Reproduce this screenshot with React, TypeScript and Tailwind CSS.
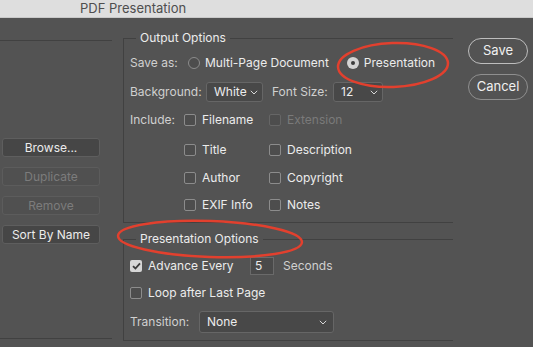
import React from "react";

const font = { fontFamily: "Inter, 'Noto Sans', sans-serif" };

function Chevron() {
  return (
    <svg width="8" height="5" viewBox="0 0 8 5" className="shrink-0">
      <polyline points="0.8,0.8 4,4 7.2,0.8" fill="none" stroke="#d8d8d8" strokeWidth="1" />
    </svg>
  );
}

function Select({ value, w }: { value: string; w: string }) {
  return (
    <div className={`flex items-center justify-between h-[20px] pl-[7px] pr-[4px] rounded-[3px] border border-[#666666] bg-[#484848] text-[#ededed] ${w}`}>
      <span>{value}</span>
      <Chevron />
    </div>
  );
}

function Check({ label, checked, disabled, w }: { label: string; checked?: boolean; disabled?: boolean; w?: string }) {
  return (
    <div className={`flex items-center gap-[6px] ${w ?? ""}`}>
      {checked ? (
        <div className="w-[12px] h-[12px] rounded-[2px] bg-[#d6d6d6] flex items-center justify-center">
          <svg width="9" height="8" viewBox="0 0 9 8">
            <polyline points="1,4.2 3.4,6.5 8,1.3" fill="none" stroke="#3a3a3a" strokeWidth="1.8" />
          </svg>
        </div>
      ) : (
        <div className={`w-[12px] h-[12px] rounded-[2px] border ${disabled ? "border-[#666666]" : "border-[#8c8c8c]"} bg-[#4d4d4d]`} />
      )}
      <span className={disabled ? "text-[#7a7a7a]" : "text-[#ececec]"}>{label}</span>
    </div>
  );
}

function Radio({ label, on }: { label: string; on?: boolean }) {
  return (
    <div className="flex items-center gap-[5px]">
      {on ? (
        <div className="w-[12px] h-[12px] rounded-full bg-[#d4d4d4] flex items-center justify-center">
          <div className="w-[4px] h-[4px] rounded-full bg-[#3c3c3c]" />
        </div>
      ) : (
        <div className="w-[12px] h-[12px] rounded-full border border-[#8c8c8c] bg-[#4d4d4d]" />
      )}
      <span className="text-[#ececec]">{label}</span>
    </div>
  );
}

function SideButton({ label, disabled }: { label: string; disabled?: boolean }) {
  return (
    <div
      className={`h-[19px] w-[98px] ml-[2px] rounded-[3px] border flex items-center justify-center ${
        disabled ? "border-[#5c5c5c] bg-[#505050] text-[#7c7c7c]" : "border-[#5e5e5e] bg-[#464646] text-[#ececec]"
      }`}
    >
      {label}
    </div>
  );
}

export default function App() {
  return (
    <div className="w-[533px] h-[347px] overflow-hidden bg-[#535353] text-[12px] relative" style={font}>
      <div className="h-[18px] bg-[#dedede] border-b border-[#c9c9c9] flex items-center pl-[80px] text-[13px] text-[#4e4e4e] leading-none">
        PDF Presentation
      </div>

      <div className="flex">
        {/* left list area */}
        <div className="w-[112px] mt-[22px] h-[299px] border-t border-b border-[#414141] flex flex-col">
          <div className="mt-[97px] flex flex-col gap-[10px]">
            <SideButton label="Browse..." />
            <SideButton label="Duplicate" disabled />
            <SideButton label="Remove" disabled />
            <SideButton label="Sort By Name" />
          </div>
        </div>

        {/* middle */}
        <div className="ml-[11px] w-[330px] flex flex-col">
          <fieldset className="mt-[12px] border-t border-l border-b border-[#414141] pl-[6px] pb-[7px]">
            <legend className="ml-[6px] px-[4px] h-[16px] leading-[16px] text-[12px] text-[#ececec]">Output Options</legend>
            <div className="mt-[7px] h-[20px] flex items-center">
              <span className="w-[58px] text-[#d0d0d0]">Save as:</span>
              <Radio label="Multi-Page Document" />
              <div className="ml-[18px]">
                <Radio label="Presentation" on />
              </div>
            </div>
            <div className="mt-[9px] h-[20px] flex items-center">
              <span className="w-[76px] text-[#d0d0d0]">Background:</span>
              <Select value="White" w="w-[57px]" />
              <span className="ml-[9px] w-[61px] text-[#d0d0d0]">Font Size:</span>
              <Select value="12" w="w-[50px]" />
            </div>
            <div className="mt-[8px] h-[20px] flex items-center">
              <span className="w-[54px] text-[#d0d0d0]">Include:</span>
              <Check label="Filename" w="w-[85px]" />
              <Check label="Extension" disabled />
            </div>
            <div className="mt-[10px] h-[20px] flex items-center pl-[54px]">
              <Check label="Title" w="w-[85px]" />
              <Check label="Description" />
            </div>
            <div className="mt-[8px] h-[20px] flex items-center pl-[54px]">
              <Check label="Author" w="w-[85px]" />
              <Check label="Copyright" />
            </div>
            <div className="mt-[7px] h-[20px] flex items-center pl-[54px]">
              <Check label="EXIF Info" w="w-[85px]" />
              <Check label="Notes" />
            </div>
          </fieldset>

          <fieldset className="mt-[8px] border-t border-l border-b border-[#414141] pl-[6px] pb-[7px]">
            <legend className="ml-[6px] px-[4px] h-[16px] leading-[16px] text-[12px] text-[#ececec]">Presentation Options</legend>
            <div className="mt-[9px] h-[20px] flex items-center">
              <Check label="Advance Every" checked w="w-[120px]" />
              <div className="h-[18px] w-[24px] border border-[#6a6a6a] bg-[#4a4a4a] pl-[4px] leading-[16px] text-[#ececec]">5</div>
              <span className="ml-[9px] text-[#d0d0d0]">Seconds</span>
            </div>
            <div className="mt-[7px] h-[20px] flex items-center">
              <Check label="Loop after Last Page" />
            </div>
            <div className="mt-[8px] h-[22px] flex items-center">
              <span className="w-[69px] text-[#d0d0d0]">Transition:</span>
              <div className="flex items-center justify-between h-[22px] w-[135px] pl-[7px] pr-[6px] rounded-[3px] border border-[#666666] bg-[#484848] text-[#ededed]">
                <span>None</span>
                <Chevron />
              </div>
            </div>
          </fieldset>
        </div>

        {/* right */}
        <div className="ml-[15px] mt-[20px] flex flex-col gap-[10px]">
          <div className="w-[60px] h-[26px] rounded-full border border-[#bdbdbd] flex items-center justify-center text-[13px] text-[#f0f0f0]">Save</div>
          <div className="w-[60px] h-[26px] rounded-full border border-[#8f8f8f] flex items-center justify-center text-[13px] text-[#f0f0f0]">Cancel</div>
        </div>
      </div>

      {/* red annotation marks */}
      <svg className="absolute left-0 top-0 pointer-events-none" width="533" height="347">
        <ellipse cx="393" cy="65" rx="55" ry="22" fill="none" stroke="#e2402e" strokeWidth="2.5" transform="rotate(-2 393 65)" />
        <ellipse cx="210" cy="239" rx="92" ry="18" fill="none" stroke="#e2402e" strokeWidth="2.5" transform="rotate(2 210 239)" />
      </svg>
    </div>
  );
}
